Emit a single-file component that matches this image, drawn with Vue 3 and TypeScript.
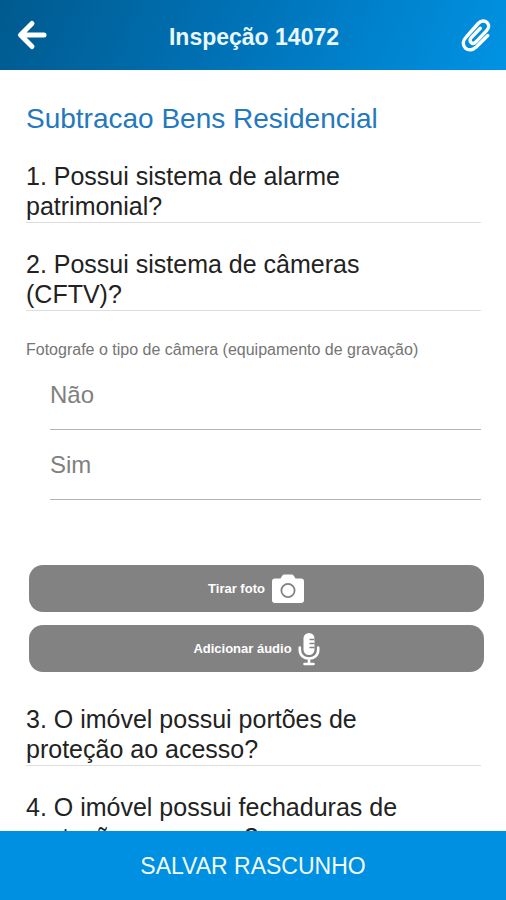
<script setup lang="ts">
import { ref } from 'vue'

interface Question {
  id: number
  text: string
  note?: string
  options?: string[]
}

const questions: Question[] = [
  { id: 1, text: 'Possui sistema de alarme patrimonial?' },
  {
    id: 2,
    text: 'Possui sistema de câmeras (CFTV)?',
    note: 'Fotografe o tipo de câmera (equipamento de gravação)',
    options: ['Não', 'Sim'],
  },
  { id: 3, text: 'O imóvel possui portões de proteção ao acesso?' },
  { id: 4, text: 'O imóvel possui fechaduras de proteção ao acesso?' },
]

const answers = ref<Record<number, string>>({})
</script>

<template>
  <div class="screen">
    <header class="topbar">
      <button class="icon-button" type="button" aria-label="Voltar">
        <svg width="32" height="32" viewBox="0 0 32 32" fill="none" stroke="#fff" stroke-width="5" stroke-linecap="round" stroke-linejoin="round">
          <path d="M16 4.500 4.500 16 16 27.500M5 16h23" />
        </svg>
      </button>
      <h1 class="title">Inspeção 14072</h1>
      <button class="icon-button" type="button" aria-label="Anexos">
        <svg width="32" height="36" viewBox="0 0 32 36" fill="none" stroke="#fff" stroke-width="3.400" stroke-linecap="round" stroke-linejoin="round">
          <path d="M27.800 18.500 16.200 30C12.600 33.400 8.200 33.600 5.300 30.900 2.400 28.100 2.600 23.800 5.900 20.400L18.200 6.500C21 3.400 24.700 3.200 27 5.400 29.300 7.600 29 11 26.600 13.600L16.200 24.700C14.500 26.500 12.400 26.700 11 25.400 9.600 24.100 9.800 22.200 11.300 20.600L20.300 11.300" />
        </svg>
      </button>
    </header>

    <main class="content">
      <h2 class="section-title">Subtracao Bens Residencial</h2>

      <section v-for="q in questions" :key="q.id" class="question">
        <h3 :id="`q-${q.id}`" class="question-text">{{ q.id }}. {{ q.text }}</h3>

        <template v-if="q.options">
          <p class="note">{{ q.note }}</p>
          <div class="options" role="radiogroup" :aria-labelledby="`q-${q.id}`">
            <label v-for="option in q.options" :key="option" class="option">
              <input v-model="answers[q.id]" class="option-input" type="radio" :name="`q-${q.id}`" :value="option" />
              <span>{{ option }}</span>
            </label>
          </div>
          <div class="actions">
            <button class="action" type="button">
              <span>Tirar foto</span>
              <svg width="34" height="30" viewBox="0 0 34 30">
                <path fill="#fff" d="M4 4.500H9.500L11.200 1.800Q12 .5 13.500 .5H20.500Q22 .5 22.800 1.800L24.500 4.500H30Q33 4.500 33 7.500V26Q33 29 30 29H4Q1 29 1 26V7.500Q1 4.500 4 4.500Z" />
                <circle cx="17" cy="16.500" r="6.600" fill="#fff" stroke="#828282" stroke-width="1.800" />
              </svg>
            </button>
            <button class="action" type="button">
              <span>Adicionar áudio</span>
              <svg width="22" height="34" viewBox="0 0 22 34">
                <rect x="5.500" y="1" width="11" height="22" rx="5.500" fill="#fff" />
                <path d="M11.500 7.500H16.500M11.500 11.500H16.500M11.500 15.500H16.500" stroke="#828282" stroke-width="1.300" />
                <path d="M1.800 15.500V18C1.800 23.200 5.800 26.500 11 26.500S20.200 23.200 20.200 18V15.500M11 26.500V31.500M6.500 32H15.500" fill="none" stroke="#fff" stroke-width="2.600" stroke-linecap="round" />
              </svg>
            </button>
          </div>
        </template>
      </section>
    </main>

    <button class="save" type="button">SALVAR RASCUNHO</button>
  </div>
</template>

<style>
body {
  margin: 0;
}
</style>

<style scoped>
.screen {
  display: flex;
  flex-direction: column;
  height: 100vh;
  background: #fff;
  font-family: "Liberation Sans", Arial, sans-serif;
  color: #222;
}

button {
  border: 0;
  font-family: inherit;
  cursor: pointer;
}

svg {
  display: block;
}

.topbar {
  display: flex;
  flex: none;
  align-items: center;
  justify-content: space-between;
  height: 70px;
  padding: 0 14px 0 16px;
  box-sizing: border-box;
  background: linear-gradient(115deg, #005a8e, #0074ba 50%, #0093e3);
}

.icon-button {
  padding: 0;
  background: none;
}

.title {
  margin: 0;
  padding-top: 4px;
  font-size: 23px;
  line-height: 28px;
  color: #e9f7ff;
}

.content {
  flex: 1;
  min-height: 0;
  padding-top: 33px;
  overflow-y: auto;
  scrollbar-width: none;
}

.section-title {
  margin: 0 25px 26px 26px;
  font-size: 28px;
  font-weight: 400;
  line-height: 32px;
  color: #2478bd;
}

.question {
  margin-bottom: 26px;
}

.question:has(.actions) {
  margin-bottom: 32px;
}

.question-text {
  margin: 0 25px 0 26px;
  padding: 0 60px 1px 0;
  border-bottom: 1px solid #dedede;
  font-size: 25px;
  font-weight: 400;
  line-height: 30px;
}

.note {
  margin: 29px 25px 0 26px;
  font-size: 16px;
  line-height: 20px;
  color: #757575;
}

.options {
  margin: 0 25px 0 50px;
}

.option {
  display: flex;
  align-items: center;
  height: 70px;
  box-sizing: border-box;
  border-bottom: 1px solid #b5b5b5;
  font-size: 24px;
  color: #808080;
  cursor: pointer;
}

.option-input {
  width: 0;
  height: 0;
  margin: 0;
  appearance: none;
}

.option:has(:checked) {
  color: #0076bd;
}

.actions {
  display: flex;
  flex-direction: column;
  gap: 13px;
  margin: 65px 22px 0 29px;
}

.action {
  display: flex;
  align-items: center;
  justify-content: center;
  gap: 6px;
  height: 47px;
  padding: 0;
  border-radius: 14px;
  background: #828282;
  font-size: 13px;
  font-weight: 700;
  color: #fff;
}

.save {
  flex: none;
  height: 69px;
  padding: 2px 0 0;
  background: #0090e1;
  font-size: 23px;
  color: #f2faff;
}
</style>
